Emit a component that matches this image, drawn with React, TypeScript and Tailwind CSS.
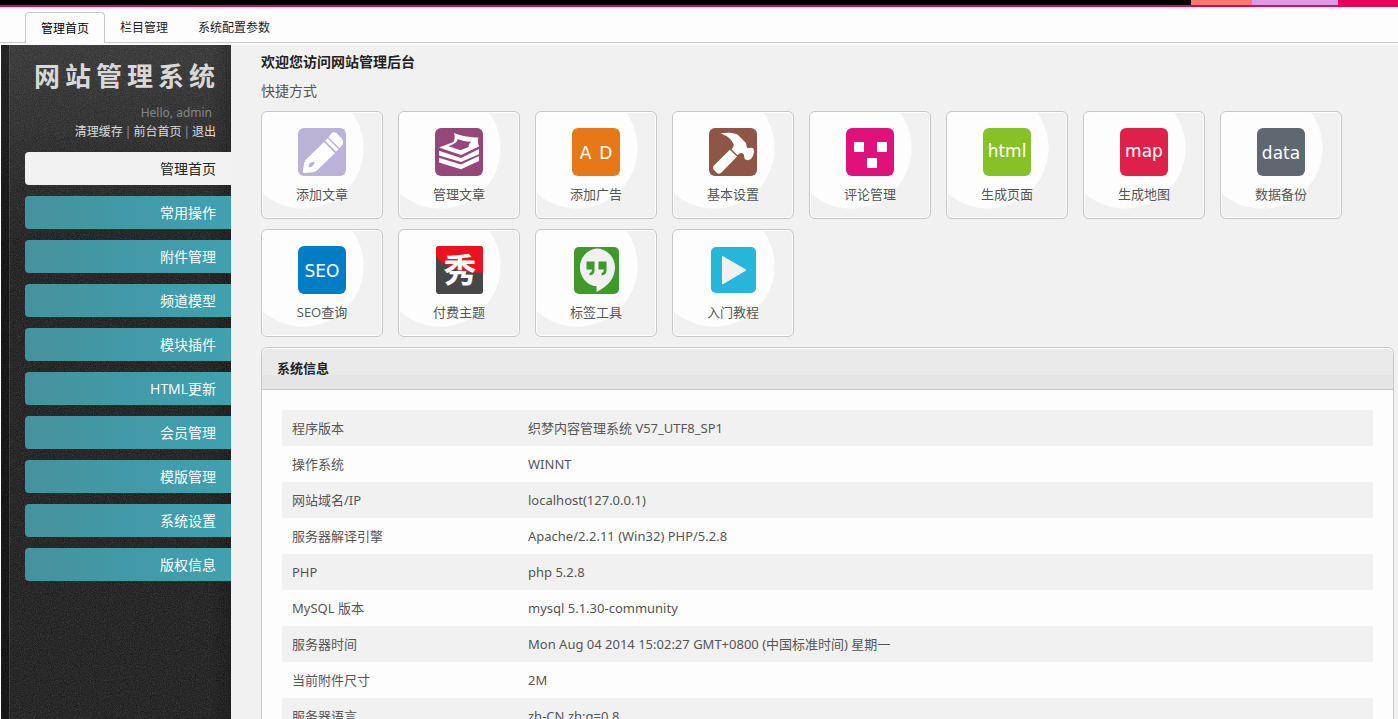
import type { ReactNode } from "react";

const tabs = ["管理首页", "栏目管理", "系统配置参数"];

const menu = [
  "管理首页",
  "常用操作",
  "附件管理",
  "频道模型",
  "模块插件",
  "HTML更新",
  "会员管理",
  "模版管理",
  "系统设置",
  "版权信息",
];

const info: [string, string][] = [
  ["程序版本", "织梦内容管理系统 V57_UTF8_SP1"],
  ["操作系统", "WINNT"],
  ["网站域名/IP", "localhost(127.0.0.1)"],
  ["服务器解译引擎", "Apache/2.2.11 (Win32) PHP/5.2.8"],
  ["PHP", "php 5.2.8"],
  ["MySQL 版本", "mysql 5.1.30-community"],
  ["服务器时间", "Mon Aug 04 2014 15:02:27 GMT+0800 (中国标准时间) 星期一"],
  ["当前附件尺寸", "2M"],
  ["服务器语言", "zh-CN,zh;q=0.8"],
];

function WordTile({ children, className }: { children: ReactNode; className: string }) {
  return (
    <span
      className={`flex size-12 items-center justify-center rounded-md pt-[2px] font-['DejaVu_Sans',sans-serif] text-[17px] leading-none text-white ${className}`}
    >
      {children}
    </span>
  );
}

function PencilIcon() {
  return (
    <svg viewBox="0 0 48 48" className="size-12" aria-hidden="true">
      <rect width="48" height="48" rx="6" fill="#bab2d7" />
      <path
        fill="#fff"
        fillRule="evenodd"
        d="M26 14 37 25 20 41.5C18.5 43 17 43.8 15 44.2L6.5 45C5 45 4.6 44.3 4.8 43L6.2 35.500C6.700 33 7.500 32 9 30.500ZM11.500 35.200 10.500 39.500 14 38.500 16.500 35.500 16 33.600Z"
      />
      <path fill="#fff" d="M27.300 12.700 29.500 10.300 40.500 21.300 38.200 23.700Z" />
      <path fill="#fff" d="M30.500 9.200 33.300 5.500Q35.500 3.300 38.500 5L43.500 10Q46 13 44.500 16.500L41.500 20.200Z" />
    </svg>
  );
}

function PapersIcon() {
  return (
    <svg viewBox="0 0 48 48" className="size-12" aria-hidden="true">
      <rect width="48" height="48" rx="6" fill="#97467a" />
      <path
        fill="#fff"
        fillRule="evenodd"
        d="M19 5C26 8 36 9.500 43.300 9.500 42.500 13 43 16 44 18.500L26 27 4 19.500 18.500 14C20 11 20 8 19 5ZM22.500 11C23 14 18 16.500 13.500 18.200L25.500 22.200 33.500 19C33.500 17 34.500 15 36.500 13.800 31 13.800 26 12.500 22.500 11Z"
      />
      <path fill="#fff" d="M4 22.800 26 30 44 21V26.200L26 34 4 27.500ZM4 29.800 26 36.500 44 28V33L26 41.300 4 34.500Z" />
    </svg>
  );
}

function HammerIcon() {
  return (
    <svg viewBox="0 0 48 48" className="size-12" aria-hidden="true">
      <rect width="48" height="48" rx="6" fill="#8f5545" />
      <path
        fill="#fff"
        d="M11.500 5.500C17 4 24 4.500 28.500 6.500L36.500 14.500C38 16.500 37 18 38 19.500 39.500 21 42.500 18.500 44.500 20.500 45.500 23 44.500 27.500 43 29.500 41.500 32 38.500 33 36.500 31.500 34.500 30 36 27.500 34 25.500 32 24.500 31 25 28.500 27.200L22.500 21.200C24.500 19 25.500 17.500 24 15 21.500 10 17.500 7.500 11.500 5.500Z"
      />
      <path fill="#fff" d="M20.800 21.700 28 28.500 12.500 44.500Q10.500 46.500 8 45L4.800 41.800Q3 39.500 5 37.500Z" />
    </svg>
  );
}

function CommentIcon() {
  return (
    <svg viewBox="0 0 48 48" className="size-12" aria-hidden="true">
      <rect width="48" height="48" rx="6" fill="#df127b" />
      <path fill="#fff" d="M8 14h10v10H8zM31 14h10v10H31zM21 30h10v10H21z" />
    </svg>
  );
}

function ThemeIcon() {
  return (
    <svg viewBox="0 0 48 48" className="size-12" aria-hidden="true">
      <rect x="1" width="47" height="48" rx="3" fill="#474747" />
      <path fill="#ec111c" d="M4 0H45Q48 0 48 3V26.500H36C24 25 9 20 1 11V3Q1 0 4 0Z" />
      <text x="25" y="36" textAnchor="middle" fill="#fff" fontSize="33" fontWeight="700">
        秀
      </text>
    </svg>
  );
}

function QuoteIcon() {
  return (
    <svg viewBox="0 0 48 48" className="size-12" aria-hidden="true">
      <rect x="2" y="1" width="45" height="47" rx="5" fill="#3f9a2b" />
      <path
        fill="#f1f1f1"
        d="M24.500 2.500A18.500 19 0 0 1 43 21.500C43 32 36 40.500 24.500 46V40.300A18.500 19 0 0 1 24.500 2.500Z"
      />
      <path
        fill="#3f9a2b"
        d="M14.500 15.500h8v9.500q-.5 4-5 4.500v-2.500q2.500-.8 2.500-3.500h-5.500zM26.500 15.500h8v9.500q-.5 4-5 4.500v-2.500q2.500-.8 2.500-3.500h-5.500z"
      />
    </svg>
  );
}

function PlayIcon() {
  return (
    <svg viewBox="0 0 48 48" className="size-12" aria-hidden="true">
      <rect x="2" y="1" width="45" height="46" rx="5" fill="#26b6da" />
      <path fill="#f1f1f1" stroke="#f1f1f1" strokeLinejoin="round" d="M13.500 10.500 37 24 13.500 38Z" />
    </svg>
  );
}

const shortcuts: { label: string; icon: ReactNode }[] = [
  { label: "添加文章", icon: <PencilIcon /> },
  { label: "管理文章", icon: <PapersIcon /> },
  {
    label: "添加广告",
    icon: (
      <WordTile className="gap-2 bg-[#e77817]">
        <span>A</span>
        <span>D</span>
      </WordTile>
    ),
  },
  { label: "基本设置", icon: <HammerIcon /> },
  { label: "评论管理", icon: <CommentIcon /> },
  { label: "生成页面", icon: <WordTile className="bg-[#86c226] pb-1">html</WordTile> },
  { label: "生成地图", icon: <WordTile className="bg-[#de214b] pb-1">map</WordTile> },
  { label: "数据备份", icon: <WordTile className="bg-[#5f6770]">data</WordTile> },
  { label: "SEO查询", icon: <WordTile className="bg-[#007dc5]">SEO</WordTile> },
  { label: "付费主题", icon: <ThemeIcon /> },
  { label: "标签工具", icon: <QuoteIcon /> },
  { label: "入门教程", icon: <PlayIcon /> },
];

function TopBar() {
  return (
    <div className="flex h-[7px] shrink-0 justify-end border-b-2 border-[#e5005a] bg-black">
      <span className="w-[61px] bg-[#fb786f]" />
      <span className="w-[86px] bg-[#dc98e3]" />
      <span className="w-[60px] bg-[#e5005a]" />
    </div>
  );
}

function Tabs() {
  return (
    <nav className="flex h-9 shrink-0 items-end border-b border-[#c8c8c8] pl-[25px] text-xs text-[#222]">
      {tabs.map((tab, i) => (
        <a
          key={tab}
          href="#"
          className={
            i === 0
              ? "-mb-px flex h-[31px] items-center rounded-t border border-b-0 border-[#c8c8c8] bg-[#fdfdfd] px-[15px] pt-px text-black"
              : "flex h-[29px] items-center px-[15px]"
          }
        >
          {tab}
        </a>
      ))}
    </nav>
  );
}

function Sidebar() {
  return (
    <aside className="relative ml-px w-[230px] shrink-0 bg-[linear-gradient(#2d2d2d,#141414_200px)]">
      <svg className="absolute inset-0 h-full w-full opacity-25" aria-hidden="true">
        <filter id="grain">
          <feTurbulence type="fractalNoise" baseFrequency="0.93" numOctaves="3" />
          <feColorMatrix type="saturate" values="0" />
        </filter>
        <rect width="100%" height="100%" filter="url(#grain)" />
      </svg>
      <div className="relative flex h-full">
        <div className="w-2 shrink-0 bg-black/40" />
        <div className="flex min-w-0 flex-1 flex-col border-l border-white/15 bg-[linear-gradient(to_right,transparent_90%,rgba(0,0,0,0.2))] pt-4">
          <h1 className="flex justify-end gap-[5px] pr-4 text-[26px] leading-[30px] font-bold text-[#d8d8d8]">
            {Array.from("网站管理系统").map((char) => (
              <span key={char}>{char}</span>
            ))}
          </h1>
          <p className="mt-[14px] pr-[19px] text-right font-['Noto_Sans',sans-serif] text-xs leading-4 text-[#858585]">
            Hello, admin
          </p>
          <p className="mt-[3px] flex justify-end gap-[2px] pr-[15px] text-xs leading-4 text-[#999]">
            <a href="#" className="text-[#ddd]">清理缓存</a>|
            <a href="#" className="text-[#ddd]">前台首页</a>|
            <a href="#" className="text-[#ddd]">退出</a>
          </p>
          <nav className="mt-[12px] flex flex-col gap-[11px] pl-[15px] text-sm">
            {menu.map((item, i) => (
              <a
                key={item}
                href="#"
                className={
                  i === 0
                    ? "flex h-[33px] items-center justify-end rounded-l bg-[#f2f2f2] pr-[15px] text-[#222]"
                    : "flex h-[33px] items-center justify-end rounded-l bg-[linear-gradient(to_right,#45929d,#40a1b1)] pr-[15px] text-white"
                }
              >
                {item}
              </a>
            ))}
          </nav>
        </div>
      </div>
    </aside>
  );
}

function Shortcut({ label, icon }: { label: string; icon: ReactNode }) {
  return (
    <a
      href="#"
      className="flex h-[108px] w-[122px] flex-col items-center rounded-md border border-[#c8c8c8] bg-[radial-gradient(circle_at_41px_36px,#fdfdfd_60px,#f1f1f1_61px)] pt-4 text-[13px] text-[#555] inset-ring inset-ring-white"
    >
      {icon}
      <span className="mt-2 leading-5">{label}</span>
    </a>
  );
}

function SystemInfo() {
  return (
    <section className="mt-[10px] rounded-t-md border border-[#c8c8c8] bg-[#fdfdfd]">
      <h3 className="flex h-[42px] items-center rounded-t-md border-t border-b border-t-white border-b-[#c8c8c8] bg-[linear-gradient(#eaeaea_26px,#e5e5e5_26px)] px-[15px] text-[13px] font-bold text-[#222]">
        系统信息
      </h3>
      <div className="p-5">
        <table className="w-full table-fixed text-left font-['Noto_Sans','Noto_Sans_CJK_SC',sans-serif] text-[13px] text-[#555]">
          <tbody>
            {info.map(([name, value]) => (
              <tr key={name} className="h-9 odd:bg-[#f1f1f1]">
                <th scope="row" className="w-[236px] px-[10px] pt-px font-normal">{name}</th>
                <td className="px-[10px] pt-px">{value}</td>
              </tr>
            ))}
          </tbody>
        </table>
      </div>
    </section>
  );
}

export default function App() {
  return (
    <div className="flex h-screen flex-col bg-[#fdfdfd] font-['Open_Sans','Noto_Sans_CJK_SC',sans-serif]">
      <TopBar />
      <Tabs />
      <div className="mt-[2px] flex min-h-0 flex-1">
        <Sidebar />
        <main className="min-w-0 flex-1 overflow-y-auto bg-[#f1f1f1] pt-[7px] pr-1 pl-[30px] [scrollbar-width:none]">
          <h2 className="text-sm font-bold text-[#222]">欢迎您访问网站管理后台</h2>
          <p className="mt-[9px] text-sm text-[#555]">快捷方式</p>
          <div className="mt-[10px] flex flex-wrap gap-x-[15px] gap-y-[10px]">
            {shortcuts.map((item) => (
              <Shortcut key={item.label} {...item} />
            ))}
          </div>
          <SystemInfo />
        </main>
      </div>
    </div>
  );
}
